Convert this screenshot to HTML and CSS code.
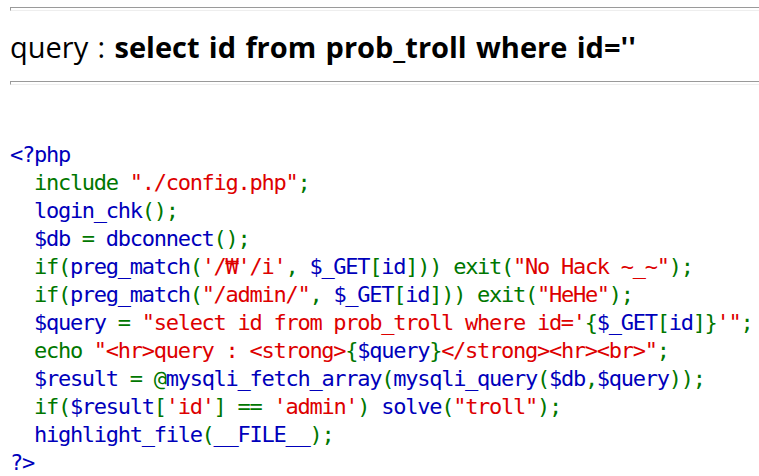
FILE: index.html
```html
<!DOCTYPE html>
<html>
<head>
<meta charset="utf-8">
<link rel="stylesheet" href="styles.css">
</head>
<body>
<hr class="rule">
<div class="query">query : <strong>select id from prob_troll where id=''</strong></div>
<hr class="rule">
<div class="code"><div class="ln"><span class="d">&lt;?php</span></div><div class="ln"><span class="k">  include </span><span class="s">"./config.php"</span><span class="k">;</span></div><div class="ln"><span class="d">  login_chk</span><span class="k">();</span></div><div class="ln"><span class="d">  $db </span><span class="k">= </span><span class="d">dbconnect</span><span class="k">();</span></div><div class="ln"><span class="k">  if(</span><span class="d">preg_match</span><span class="k">(</span><span class="s">'/₩'/i'</span><span class="k">, </span><span class="d">$_GET</span><span class="k">[</span><span class="d">id</span><span class="k">])) exit(</span><span class="s">"No Hack ~_~"</span><span class="k">);</span></div><div class="ln"><span class="k">  if(</span><span class="d">preg_match</span><span class="k">(</span><span class="s">"/admin/"</span><span class="k">, </span><span class="d">$_GET</span><span class="k">[</span><span class="d">id</span><span class="k">])) exit(</span><span class="s">"HeHe"</span><span class="k">);</span></div><div class="ln"><span class="d">  $query </span><span class="k">= </span><span class="s">"select id from prob_troll where id='</span><span class="k">{</span><span class="d">$_GET</span><span class="k">[</span><span class="d">id</span><span class="k">]}</span><span class="s">'"</span><span class="k">;</span></div><div class="ln"><span class="k">  echo </span><span class="s">"&lt;hr&gt;query : &lt;strong&gt;</span><span class="k">{</span><span class="d">$query</span><span class="k">}</span><span class="s">&lt;/strong&gt;&lt;hr&gt;&lt;br&gt;"</span><span class="k">;</span></div><div class="ln"><span class="d">  $result </span><span class="k">= @</span><span class="d">mysqli_fetch_array</span><span class="k">(</span><span class="d">mysqli_query</span><span class="k">(</span><span class="d">$db</span><span class="k">,</span><span class="d">$query</span><span class="k">));</span></div><div class="ln"><span class="k">  if(</span><span class="d">$result</span><span class="k">[</span><span class="s">'id'</span><span class="k">] == </span><span class="s">'admin'</span><span class="k">) </span><span class="d">solve</span><span class="k">(</span><span class="s">"troll"</span><span class="k">);</span></div><div class="ln"><span class="d">  highlight_file</span><span class="k">(</span><span class="d">__FILE__</span><span class="k">);</span></div><div class="ln"><span class="d">?&gt;</span></div></div>
</body>
</html>
```
FILE: styles.css
```css
html, body {
  background: #ffffff;
}
body {
  margin: 0;
  padding: 7px 0 0 10px;
  overflow: hidden;
}
.rule {
  margin: 0;
  height: 2px;
  border-style: solid;
  border-width: 1px 0 1px 1px;
  border-color: #9a9a9a #eeeeee #eeeeee #9a9a9a;
}
.query {
  height: 69px;
  padding-top: 1px;
  line-height: 70px;
  font-family: "Open Sans", "Noto Sans", sans-serif;
  font-size: 29px;
  word-spacing: 1.8px;
  color: #000;
  white-space: nowrap;
}
.query strong {
  font-weight: 700;
}
.code {
  margin-top: 56px;
  font-family: "DejaVu Sans Mono", monospace;
  font-size: 22px;
  letter-spacing: -1.27px;
  line-height: 28px;
}
.ln {
  white-space: pre;
  height: 28px;
}
.d { color: #0000bb; }
.k { color: #007700; }
.s { color: #dd0000; }
```
